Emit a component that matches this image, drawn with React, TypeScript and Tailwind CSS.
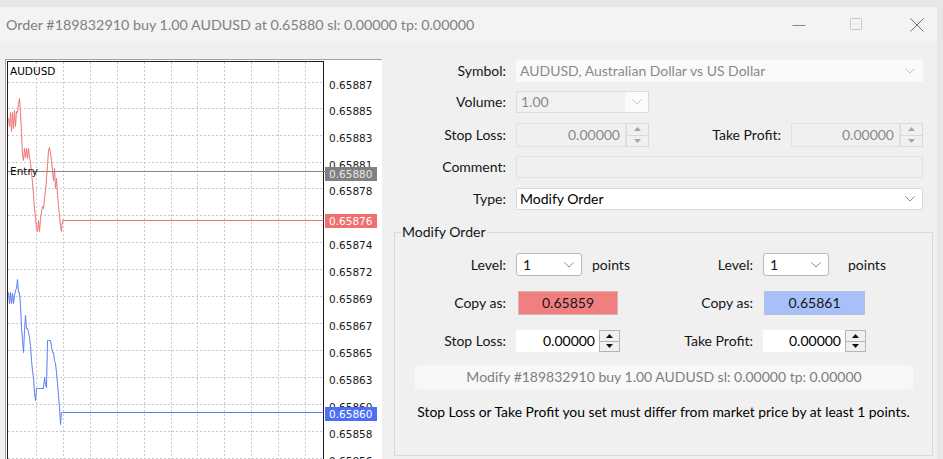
import React from "react";

type Pt = [number, number];

const redPts: Pt[] = [
  [8, 118], [9, 126], [10, 112], [11, 131], [12, 112], [13, 128], [14, 110], [15, 126], [16, 111], [17, 112],
  [18, 104], [19, 98], [20, 112], [21, 132], [22, 155], [23, 160], [24, 148], [25, 157], [26, 148], [27, 158],
  [28, 148], [29, 157], [30, 162], [31, 172], [32, 182], [33, 195], [34, 208], [35, 218], [36, 228], [37, 231],
  [38, 220], [39, 231], [40, 218], [41, 212], [42, 206], [43, 208], [44, 198], [45, 190], [46, 178], [47, 165],
  [48, 150], [49, 147], [50, 153], [51, 160], [52, 170], [53, 180], [54, 168], [55, 188], [56, 178], [57, 195],
  [58, 205], [59, 215], [60, 226], [61, 231], [62, 220], [323, 220],
];

const bluePts: Pt[] = [
  [8, 292], [9, 303], [10, 292], [11, 303], [12, 293], [13, 303], [14, 295], [15, 290], [16, 288], [17, 279],
  [18, 292], [19, 292], [20, 305], [21, 327], [22, 340], [23, 352], [24, 330], [25, 315], [26, 328], [27, 328],
  [28, 332], [29, 337], [30, 345], [31, 360], [32, 370], [33, 377], [34, 392], [35, 400], [36, 388], [38, 388],
  [40, 388], [43, 388], [44, 377], [45, 384], [46, 387], [47, 340], [48, 340], [50, 340], [51, 346], [52, 352],
  [53, 352], [54, 360], [55, 363], [56, 372], [57, 383], [58, 395], [59, 407], [60, 424], [61, 412], [62, 412],
  [323, 412],
];

const vGrid = [36, 63, 90, 117, 144, 171, 197, 224, 251, 278, 305];
const hGrid = [82, 108, 135, 162, 188, 215, 242, 269, 296, 323, 350, 377, 404, 431, 458];

const priceLabels: [number, string][] = [
  [82, "0.65887"],
  [108, "0.65885"],
  [135, "0.65883"],
  [162, "0.65881"],
  [188, "0.65878"],
  [242, "0.65874"],
  [269, "0.65872"],
  [296, "0.65869"],
  [323, "0.65867"],
  [350, "0.65865"],
  [377, "0.65863"],
  [404, "0.65860"],
  [431, "0.65858"],
  [458, "0.65856"],
];

const toPath = (pts: Pt[]) => pts.map(([x, y], i) => `${i ? "L" : "M"}${x + 0.5} ${y + 0.5}`).join(" ");

function Chart() {
  const font = "DejaVu Sans, Verdana, sans-serif";
  return (
    <svg width="376" height="400" viewBox="6 60 376 400" className="block">
      <rect x="6" y="60" width="376" height="400" fill="#ffffff" />
      {vGrid.map((x) => (
        <line key={"v" + x} x1={x + 0.5} y1={62} x2={x + 0.5} y2={460} stroke="#c9c9c9" strokeDasharray="2 2" />
      ))}
      {hGrid.map((y) => (
        <line key={"h" + y} x1={8} y1={y + 0.5} x2={323} y2={y + 0.5} stroke="#c9c9c9" strokeDasharray="2 2" />
      ))}
      <line x1={7.5} y1={61} x2={7.5} y2={460} stroke="#1a1a1a" />
      <line x1={7} y1={61.5} x2={324} y2={61.5} stroke="#1a1a1a" />
      <line x1={323.5} y1={61} x2={323.5} y2={460} stroke="#1a1a1a" />

      <path d={toPath(redPts)} fill="none" stroke="#f07272" strokeWidth="1" />
      <path d={toPath(bluePts)} fill="none" stroke="#5b7bf3" strokeWidth="1" />
      <line x1={8} y1={171.5} x2={325} y2={171.5} stroke="#858585" />

      <text x={10} y={75} fontFamily={font} fontSize="10.5" fill="#000">AUDUSD</text>
      <text x={10} y={175} fontFamily={font} fontSize="10.5" fill="#111">Entry</text>

      {priceLabels.map(([y, t]) => (
        <text key={t} x={329} y={y + 6.5} fontFamily={font} fontSize="10.5" fill="#1a1a1a">
          {t}
        </text>
      ))}

      <rect x={325} y={167} width={52} height={14} fill="#808080" />
      <text x={329} y={178} fontFamily={font} fontSize="10.5" fill="#e6e6e6">0.65880</text>
      <rect x={325} y={214} width={52} height={14} fill="#ef7070" />
      <text x={329} y={225} fontFamily={font} fontSize="10.5" fill="#ffffff">0.65876</text>
      <rect x={325} y={407} width={52} height={14} fill="#4d6ff4" />
      <text x={329} y={418} fontFamily={font} fontSize="10.5" fill="#ffffff">0.65860</text>
    </svg>
  );
}

function Chevron({ color = "#a0a0a0" }: { color?: string }) {
  return (
    <svg width="10" height="6" viewBox="0 0 10 6">
      <path d="M0.5 0.5 L5 5 L9.5 0.5" fill="none" stroke={color} strokeWidth="1" />
    </svg>
  );
}

function Spinner({ disabled }: { disabled?: boolean }) {
  const tri = disabled ? "#a6a6a6" : "#111111";
  return (
    <div className="flex flex-col h-full w-full">
      <div
        className={
          disabled
            ? "flex-1 flex items-center justify-center border border-[#d9d9d9] bg-[#f0f0f0]"
            : "flex-1 flex items-center justify-center border border-[#b4b4b4] bg-[#f0f0f0]"
        }
      >
        <svg width="7" height="4" viewBox="0 0 7 4">
          <path d="M3.5 0 L7 4 L0 4 Z" fill={tri} />
        </svg>
      </div>
      <div
        className={
          disabled
            ? "flex-1 flex items-center justify-center border border-t-0 border-[#d9d9d9] bg-[#f0f0f0]"
            : "flex-1 flex items-center justify-center border border-t-0 border-[#b4b4b4] bg-[#f0f0f0]"
        }
      >
        <svg width="7" height="4" viewBox="0 0 7 4">
          <path d="M0 0 L7 0 L3.5 4 Z" fill={tri} />
        </svg>
      </div>
    </div>
  );
}

function TitleBar() {
  return (
    <div className="h-[35px] shrink-0 bg-[#f3f3f3] flex items-center">
      <div className="pl-[6px] flex-1 text-[14.3px] text-[#808080] whitespace-nowrap">
        Order #189832910 buy 1.00 AUDUSD at 0.65880 sl: 0.00000 tp: 0.00000
      </div>
      <div className="flex items-center pr-[13px]">
        <svg width="14" height="12" viewBox="0 0 14 12" className="block">
          <line x1="0.5" y1="6.5" x2="13.5" y2="6.5" stroke="#8a8a8a" />
        </svg>
        <svg width="13" height="13" viewBox="0 0 13 13" className="ml-[44px] block">
          <rect x="0.5" y="0.5" width="11" height="11" rx="1" fill="none" stroke="#c6c6c6" />
        </svg>
        <svg width="14" height="14" viewBox="0 0 14 14" className="ml-[47px] block">
          <path d="M0.5 0.5 L13.5 13.5 M13.5 0.5 L0.5 13.5" stroke="#6e6e6e" strokeWidth="1" />
        </svg>
      </div>
    </div>
  );
}

function FormPanel() {
  return (
    <div className="flex-1 flex flex-col text-[14px] text-[#151515] leading-[18px]">
      {/* Symbol */}
      <div className="mt-[18px] h-[22px] flex items-center">
        <div className="w-[124px] text-right">Symbol:</div>
        <div className="ml-[10px] w-[407px] h-full bg-[#fafafa] flex items-center justify-between pl-[4px] pr-[8px] text-[#8a8a8a]">
          <span>AUDUSD, Australian Dollar vs US Dollar</span>
          <Chevron color="#c4c4c4" />
        </div>
      </div>
      {/* Volume */}
      <div className="mt-[9px] h-[22px] flex items-center">
        <div className="w-[124px] text-right">Volume:</div>
        <div className="ml-[10px] w-[133px] h-full border border-[#dcdcdc] flex">
          <div className="w-[108px] bg-[#f1f1f1] flex items-center pl-[4px] text-[#8a8a8a]">1.00</div>
          <div className="flex-1 bg-[#fbfbfb] flex items-center justify-center">
            <Chevron color="#c8c8c8" />
          </div>
        </div>
      </div>
      {/* Stop Loss / Take Profit */}
      <div className="mt-[10px] h-[24px] flex items-center">
        <div className="w-[124px] text-right">Stop Loss:</div>
        <div className="ml-[10px] w-[110px] h-full border border-[#e2e2e2] bg-[#f0f0f0] flex items-center justify-end pr-[5px] text-[#8a8a8a]">
          0.00000
        </div>
        <div className="w-[23px] h-full">
          <Spinner disabled />
        </div>
        <div className="w-[132px] text-right">Take Profit:</div>
        <div className="ml-[10px] w-[109px] h-full border border-[#e2e2e2] bg-[#f0f0f0] flex items-center justify-end pr-[5px] text-[#8a8a8a]">
          0.00000
        </div>
        <div className="w-[23px] h-full">
          <Spinner disabled />
        </div>
      </div>
      {/* Comment */}
      <div className="mt-[9px] h-[22px] flex items-center">
        <div className="w-[124px] text-right">Comment:</div>
        <div className="ml-[10px] w-[407px] h-full border border-[#e2e2e2] bg-[#f0f0f0]" />
      </div>
      {/* Type */}
      <div className="mt-[10px] h-[22px] flex items-center">
        <div className="w-[124px] text-right">Type:</div>
        <div className="ml-[10px] w-[407px] h-full border border-[#d9d9d9] rounded-[2px] bg-white flex items-center justify-between pl-[3px] pr-[7px] text-[#000]">
          <span>Modify Order</span>
          <Chevron color="#8a8a8a" />
        </div>
      </div>

      {/* Group */}
      <fieldset className="mt-[13px] ml-[12px] w-[539px] flex-1 mb-[3px] border border-[#dadada] min-w-0">
        <legend className="ml-[6px] px-[1px] leading-[18px]">Modify Order</legend>
        <div className="flex flex-col">
          {/* Level */}
          <div className="mt-[12px] h-[23px] flex items-center">
            <div className="w-[245px] flex items-center h-full">
              <div className="w-[111px] text-right">Level:</div>
              <div className="ml-[10px] w-[66px] h-full border border-[#b9b9b9] rounded-[3px] bg-white flex items-center justify-between pl-[6px] pr-[7px]">
                <span>1</span>
                <Chevron color="#8e8e8e" />
              </div>
              <div className="ml-[10px]">points</div>
            </div>
            <div className="w-[113px] text-right">Level:</div>
            <div className="ml-[10px] w-[66px] h-full border border-[#b9b9b9] rounded-[3px] bg-white flex items-center justify-between pl-[6px] pr-[7px]">
              <span>1</span>
              <Chevron color="#8e8e8e" />
            </div>
            <div className="ml-[19px]">points</div>
          </div>
          {/* Copy as */}
          <div className="mt-[15px] h-[24px] flex items-center">
            <div className="w-[245px] flex items-center h-full">
              <div className="w-[111px] text-right">Copy as:</div>
              <div className="ml-[12px] w-[100px] h-full bg-[#f08080] border border-[#dcb4b4] flex items-center justify-center">
                0.65859
              </div>
            </div>
            <div className="w-[113px] text-right">Copy as:</div>
            <div className="ml-[11px] w-[101px] h-full bg-[#a8c0fa] border border-[#b4c0dc] flex items-center justify-center">
              0.65861
            </div>
          </div>
          {/* Stop Loss / Take Profit */}
          <div className="mt-[15px] h-[22px] flex items-center">
            <div className="w-[245px] flex items-center h-full">
              <div className="w-[111px] text-right">Stop Loss:</div>
              <div className="ml-[10px] w-[83px] h-full bg-white flex items-center justify-end pr-[4px] text-[#000]">
                0.00000
              </div>
              <div className="w-[21px] h-full">
                <Spinner />
              </div>
            </div>
            <div className="w-[113px] text-right">Take Profit:</div>
            <div className="ml-[10px] w-[82px] h-full bg-white flex items-center justify-end pr-[4px] text-[#000]">
              0.00000
            </div>
            <div className="w-[21px] h-full">
              <Spinner />
            </div>
          </div>
          {/* Info bar */}
          <div className="mt-[13px] ml-[20px] w-[498px] h-[24px] bg-[#f8f8f8] rounded-[2px] flex items-center justify-center text-[#7e7e7e]">
            Modify #189832910 buy 1.00 AUDUSD sl: 0.00000 tp: 0.00000
          </div>
          <div className="mt-[14px] text-center text-[13.9px] text-[#000]">
            Stop Loss or Take Profit you set must differ from market price by at least 1 points.
          </div>
        </div>
      </fieldset>
    </div>
  );
}

export default function App() {
  return (
    <div className="w-[943px] h-[459px] bg-[#e7e7e7] flex flex-col overflow-hidden font-['Lato',sans-serif]">
      <div className="h-[7px] shrink-0" />
      <div className="flex flex-1 min-h-0">
        <div className="w-[937px] flex flex-col">
          <TitleBar />
          <div className="flex-1 bg-[#f0f0f0] flex min-h-0">
            <div className="w-[382px] shrink-0 pl-[5px] pt-[17px] flex flex-col">
              <div className="flex-1 border-t border-l border-[#a0a0a0] bg-white overflow-hidden">
                <Chart />
              </div>
            </div>
            <FormPanel />
          </div>
        </div>
      </div>
    </div>
  );
}
